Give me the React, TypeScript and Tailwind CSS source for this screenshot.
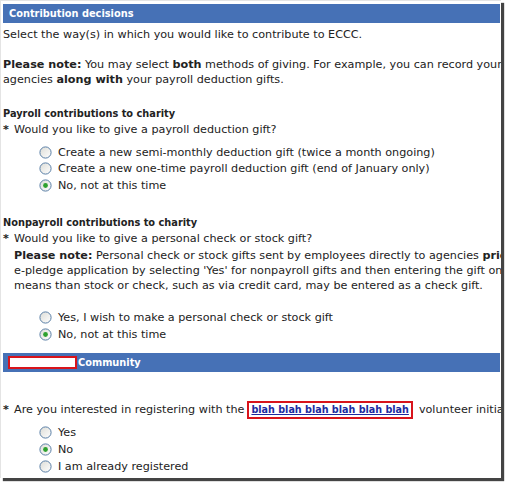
import React from 'react';

const font = "font-['DejaVu_Sans',Verdana,sans-serif]";

const Radio = ({ checked = false }: { checked?: boolean }) => (
  <svg width="13" height="13" viewBox="0 0 13 13" className="shrink-0">
    <defs>
      <linearGradient id="rfill" x1="0" y1="0" x2="1" y2="1">
        <stop offset="0" stopColor="#dcdcd6" />
        <stop offset="1" stopColor="#ffffff" />
      </linearGradient>
    </defs>
    <circle cx="6.5" cy="6.5" r="5.6" fill="url(#rfill)" stroke="#5a7fa6" strokeWidth="1" />
    {checked && <circle cx="6.5" cy="6.5" r="2.4" fill="#2ea12e" />}
  </svg>
);

const Option = ({ label, checked, h = 'h-[16.5px]' }: { label: string; checked?: boolean; h?: string }) => (
  <div className={`flex items-center ${h} pl-[38px] whitespace-nowrap`}>
    <Radio checked={checked} />
    <span className="ml-[6px] shrink-0">{label}</span>
  </div>
);

const Bar = ({ children }: { children: React.ReactNode }) => (
  <div className="h-[19px] ml-[2px] mr-[1px] bg-[#4671b6] flex items-center text-white font-bold text-[9.8px] whitespace-nowrap">
    {children}
  </div>
);

const Star = () => <span className="w-[11px] shrink-0 font-bold">*</span>;

export default function App() {
  return (
    <div className="w-[505px] h-[482px] bg-white">
      <div
        className={`w-[501px] h-[478px] bg-white overflow-hidden border-t border-l border-[#e4e4e4] shadow-[3px_3px_1px_#444] ${font} text-[11.2px] leading-[15px] text-[#222]`}
      >
        <div className="mt-[3px]">
          <Bar>
            <span className="pl-[6px]">Contribution decisions</span>
          </Bar>
        </div>

        <div className="mt-[4px] pl-[2px] whitespace-nowrap">
          Select the way(s) in which you would like to contribute to ECCC.
        </div>

        <div className="mt-[15px] pl-[2px] whitespace-nowrap">
          <div>
            <b>Please note:</b> You may select <b>both</b> methods of giving. For example, you can record your gifts to
          </div>
          <div>
            agencies <b>along with</b> your payroll deduction gifts.
          </div>
        </div>

        <div className="mt-[19px] pl-[2px] font-bold text-[9.8px] whitespace-nowrap">
          Payroll contributions to charity
        </div>
        <div className="mt-[1px] pl-[2px] whitespace-nowrap flex">
          <Star />
          <span className="shrink-0">Would you like to give a payroll deduction gift?</span>
        </div>

        <div className="mt-[7px]">
          <Option label="Create a new semi-monthly deduction gift (twice a month ongoing)" />
          <Option label="Create a new one-time payroll deduction gift (end of January only)" />
          <Option label="No, not at this time" checked />
        </div>

        <div className="mt-[21px] pl-[2px] font-bold text-[9.8px] whitespace-nowrap">
          Nonpayroll contributions to charity
        </div>
        <div className="mt-[1px] pl-[2px] whitespace-nowrap flex">
          <Star />
          <span className="shrink-0">Would you like to give a personal check or stock gift?</span>
        </div>
        <div className="mt-[2px] pl-[13px] whitespace-nowrap">
          <div>
            <b>Please note:</b> Personal check or stock gifts sent by employees directly to agencies <b>prior to</b>
          </div>
          <div>e-pledge application by selecting 'Yes' for nonpayroll gifts and then entering the gift on the</div>
          <div>means than stock or check, such as via credit card, may be entered as a check gift.</div>
        </div>

        <div className="mt-[17px]">
          <Option label="Yes, I wish to make a personal check or stock gift" />
          <Option label="No, not at this time" checked />
        </div>

        <div className="mt-[10px]">
          <Bar>
            <span className="ml-[5px] w-[69px] h-[13px] shrink-0 bg-white border-2 border-[#d8141c]" />
            <span className="ml-[1px]">Community</span>
          </Bar>
        </div>

        <div className="mt-[29px] h-[18px] pl-[2px] whitespace-nowrap flex items-center">
          <Star />
          <span className="shrink-0">Are you interested in registering with the</span>
          <span className="ml-[3px] h-[18px] px-[2px] shrink-0 border-2 border-[#d8141c] flex items-center">
            <a className="font-bold text-[9.6px] text-[#1c2aa0] underline">blah blah blah blah blah blah</a>
          </span>
          <span className="ml-[6px] shrink-0">volunteer initiative?</span>
        </div>

        <div className="mt-[5px]">
          <Option label="Yes" h="h-[17px]" />
          <Option label="No" checked h="h-[17px]" />
          <Option label="I am already registered" h="h-[17px]" />
        </div>
      </div>
    </div>
  );
}
